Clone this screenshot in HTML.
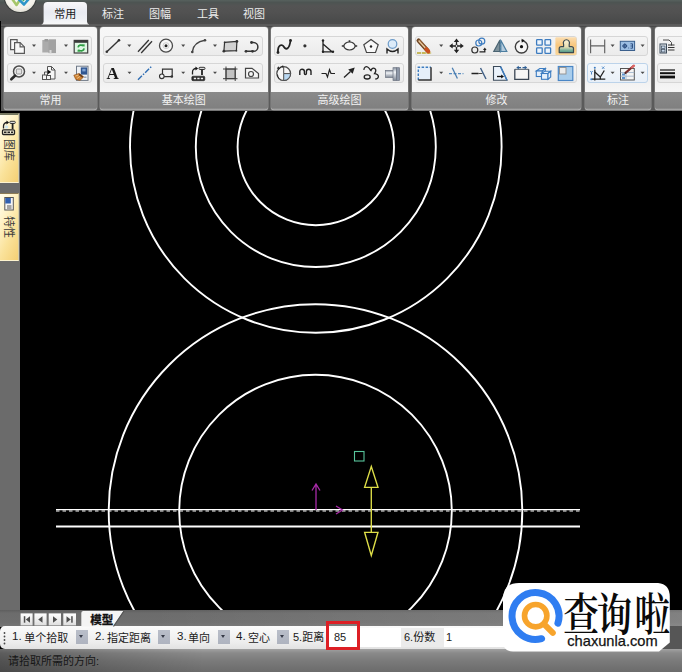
<!DOCTYPE html>
<html lang="zh-CN">
<head>
<meta charset="utf-8">
<title>CAD</title>
<style>
html,body{margin:0;padding:0;background:#000;}
body{width:682px;height:672px;overflow:hidden;font-family:"Liberation Sans","Noto Sans CJK SC",sans-serif;}
#root{position:relative;width:682px;height:672px;overflow:hidden;background:#000;}
.abs{position:absolute;}
#topbar{left:0;top:0;width:682px;height:27px;background:linear-gradient(#57615e 0,#4d5452 2.500px,#545454 6px,#515151 13px,#4a4b4b 21px,#4c4c4c 23.500px,#626262 25px,#565656 26px,#3c3c3c 27px);}
#ribbon{left:0;top:27px;width:682px;height:83.500px;background:#5a5a5a;}
.grp{position:absolute;top:0;height:83px;background:linear-gradient(#f7f7f7,#f1f1f1 55px,#f6f6f6 65px);border-radius:3px 3px 3px 3px;overflow:hidden;box-shadow:0 0 0 0.500px #8e8e8e;}
.grp .lab{position:absolute;left:0;right:0;top:65.400px;bottom:0;background:linear-gradient(#8a8a8a 0,#858585 8px,#808080 16px,#a4a4a4 17.600px);color:#f3f3f3;font-size:11px;line-height:17px;text-align:center;}
.row{position:absolute;height:18px;border:1px solid #d6d6d6;border-radius:3px;background:linear-gradient(#f4f4f4,#ebebeb);box-sizing:content-box;}
.tab{position:absolute;top:0.600px;height:26px;line-height:26px;font-size:11px;color:#ececec;white-space:nowrap;}
#tabact{position:absolute;left:44px;top:2px;width:43px;height:22.500px;border-radius:5px 5px 0 0;box-shadow:-1px 1px 0 -0.500px #cfcfcf,1px 1px 0 -0.500px #cfcfcf;background:linear-gradient(#fbfbfb,#eef0f4 60%,#f4f4f4);}
#side{left:0;top:113.200px;width:19.800px;height:498px;background:#6b6b6b;}
.vtab{position:absolute;left:0;width:17.600px;border-bottom:1px solid #fdf3cf;background:linear-gradient(115deg,#fffdf0 0,#fff3c8 30%,#fae29a 62%,#f4cf74 100%);border-right:0.800px solid #d8cfa8;}
.vtxt{position:absolute;left:2px;writing-mode:vertical-rl;text-orientation:sideways;font-size:11px;line-height:13px;color:#3c3c3c;white-space:nowrap;}
#canvas{left:20px;top:110.500px;width:662px;height:500px;background:#000;}
#band{left:0;top:610px;width:682px;height:17px;background:linear-gradient(90deg,rgba(0,0,0,0) 150px,rgba(255,255,255,0.070) 400px,rgba(255,255,255,0.140) 680px),linear-gradient(#5e5e5e 0,#6c6c6c 3px,#6e6e6e 12px,#767676 17px);}
#tool{left:0;top:626px;width:682px;height:23px;background:linear-gradient(90deg,rgba(0,0,0,0) 520px,#565656 520px),linear-gradient(#fbfbfb,#ededed 70%,#e2e2e2);border-radius:5px 0 0 5px;}
#status{left:0;top:648.500px;width:682px;height:24px;background:linear-gradient(90deg,rgba(0,0,0,0.330),rgba(0,0,0,0.120) 16%,rgba(0,0,0,0) 30%),linear-gradient(#a2a2a2 0,#8a8a8a 4px,#7a7a7a 12px,#6a6a6a 24px);}
.t{position:absolute;font-size:11px;line-height:14px;color:#1a1a1a;white-space:nowrap;}
.dd{position:absolute;top:4.200px;width:12px;height:14.300px;background:linear-gradient(#b9bec9,#aeb3bf);}
.dd:after{content:"";position:absolute;left:3.400px;top:5.200px;border:2.700px solid transparent;border-top:3px solid #363b48;border-bottom:0;}
.nav{position:absolute;top:613px;width:12px;height:12px;background:linear-gradient(#fdfdfd,#dcdcdc);border:0;}
</style>
</head>
<body>
<div id="root">
  <div id="topbar" class="abs"></div>
  <svg class="abs" style="left:38px;top:0" width="56" height="27" viewBox="38 0 56 27"><defs><linearGradient id="tg" x1="0" y1="0" x2="0" y2="1"><stop offset="0" stop-color="#f7f7f9"/><stop offset="0.450" stop-color="#e9ebf2"/><stop offset="0.750" stop-color="#eef0f5"/><stop offset="1" stop-color="#f8f8f8"/></linearGradient></defs><path d="M41.300 24.400 Q43.600 24 43.600 21.500 V6 Q43.600 2 47.600 2 H83 Q87 2 87 6 V21.500 Q87 24 89.300 24.400 Z" fill="url(#tg)"/></svg>
  <div class="tab" style="left:54.300px;color:#1a1a1a">常用</div>
  <div class="tab" style="left:102px">标注</div>
  <div class="tab" style="left:149px">图幅</div>
  <div class="tab" style="left:197px">工具</div>
  <div class="tab" style="left:243px">视图</div>

  <div id="ribbon" class="abs">
    <div class="grp" style="left:4px;width:93px"><div class="row" style="left:3px;top:9px;width:83px"></div><div class="row" style="left:3px;top:36px;width:83px"></div><div class="lab">常用</div></div>
    <div class="grp" style="left:100px;width:167.500px"><div class="row" style="left:3px;top:9px;width:158px"></div><div class="row" style="left:3px;top:36px;width:158px"></div><div class="lab">基本绘图</div></div>
    <div class="grp" style="left:271px;width:137px"><div class="row" style="left:3px;top:9px;width:128px"></div><div class="row" style="left:3px;top:36px;width:128px"></div><div class="lab">高级绘图</div></div>
    <div class="grp" style="left:412px;width:169px"><div class="row" style="left:3px;top:9px;width:160px"></div><div class="row" style="left:3px;top:36px;width:160px"></div><div class="lab">修改</div></div>
    <div class="grp" style="left:585px;width:66px"><div class="row" style="left:2px;top:9px;width:59px"></div><div class="row" style="left:2px;top:36px;width:59px;border-color:#bcd3ea;background:linear-gradient(#f3f7fb,#e9f0f8)"></div><div class="lab">标注</div></div>
    <div class="grp" style="left:655px;width:40px"><div class="row" style="left:2px;top:9px;width:40px"></div><div class="row" style="left:2px;top:36px;width:40px"></div><div class="lab"></div></div>
  </div>

<svg class="abs" id="icons" style="left:0;top:0;filter:blur(0.350px)" width="682" height="112" viewBox="0 0 682 112">
<g stroke="#5a5a5a" stroke-width="1.200" fill="#f8f8f8"><path d="M10.600 39.600 h6.500 v10 h-6.500 z"/><path d="M14.600 42.600 h5.500 l4.300 4.300 v6.500 h-9.800 z"/><path d="M20.100 42.600 v4.300 h4.300" fill="none"/></g>
<path d="M32.0 44.6 h4 l-2 2.300 z" fill="#4a4a4a" stroke="none"/>
<g stroke="none"><rect x="42.300" y="40" width="8" height="12.500" fill="#ababab"/><rect x="48.500" y="39.300" width="7.500" height="13.800" fill="#a2a2a2"/><rect x="44.500" y="39" width="3.500" height="2.500" fill="#9a9a9a"/><rect x="49.500" y="50" width="2" height="3.500" fill="#d8d8d8"/></g>
<path d="M64.0 44.6 h4 l-2 2.300 z" fill="#4a4a4a" stroke="none"/>
<g transform="translate(-0.400 0.100)"><rect x="74.600" y="40.300" width="13.500" height="12.600" fill="#e0f6e4" stroke="#3f3f3f" stroke-width="1.200"/><rect x="74.600" y="40.300" width="13.500" height="2.400" fill="#3a3a3a" stroke="none"/><path d="M78.500 47.300 a3 2.600 0 0 1 5.200 -1.500 M84.500 48.300 a3 2.600 0 0 1 -5.200 1.600" fill="none" stroke="#2f9e44" stroke-width="1.700"/><path d="M82.500 44.200 l2.800 0.300 l-0.800 2.600 z M80.500 51.800 l-2.800 -0.300 l0.800 -2.600 z" fill="#2f9e44" stroke="none"/></g>
<g><circle cx="19" cy="71.500" r="5.500" fill="#f4f4f4" stroke="#4a4a4a" stroke-width="1.500"/><rect x="16.300" y="69" width="5.400" height="5" rx="1" fill="#e2e2e2" stroke="#8a8a8a" stroke-width="0.900"/><path d="M15 75.700 L11.300 79.300" stroke="#2a2a2a" stroke-width="2.600" stroke-linecap="round"/></g>
<path d="M32.0 71.7 h4 l-2 2.300 z" fill="#4a4a4a" stroke="none"/>
<g stroke="#555" stroke-width="1" fill="#f6f6f6"><path d="M47.500 66.500 h4 l3.500 3.500 v9 h-7.500 z"/><path d="M51.500 66.500 v3.500 h3.500" fill="none"/><rect x="42.500" y="75" width="4" height="4.500"/><rect x="46.500" y="75.500" width="4" height="4"/><path d="M44.500 75 v-3 h3" fill="none"/><path d="M47.800 69.800 l3.400 2.200 l-3.400 2.200 z" fill="#111" stroke="none"/></g>
<path d="M64.0 71.7 h4 l-2 2.300 z" fill="#4a4a4a" stroke="none"/>
<g><rect x="76.500" y="66.200" width="11.500" height="14.200" fill="#eef1f5" stroke="#707a88" stroke-width="1"/><rect x="80.800" y="67.400" width="6.300" height="7.200" fill="#2f5590" stroke="none"/><rect x="82.300" y="68.800" width="3.300" height="2.600" fill="#7fa3d4" stroke="none"/><rect x="84" y="76.500" width="2.500" height="1.500" fill="#9aa6b8" stroke="none"/><path d="M73.800 75.200 l5.200 -1.800 l4.700 3.500 l-3.700 3.500 l-4.200 -0.900 z" fill="#cf8232" stroke="#8a4a12" stroke-width="0.600"/><path d="M75.500 76 l3 -1 M77 78.500 l3.500 -2.500" stroke="#f3d3a0" stroke-width="0.700" fill="none"/><path d="M79.500 73.600 l4 3 l-1.200 1.200 l-3.800 -2.900z" fill="#6a3f1d" stroke="none"/></g>
<g stroke="#333" fill="#333"><line x1="106.800" y1="51.700" x2="119" y2="40.300" stroke-width="1.400"/><circle cx="106.800" cy="51.700" r="1.300" stroke="none"/><circle cx="119" cy="40.300" r="1.300" stroke="none"/></g>
<path d="M127.3 44.6 h4 l-2 2.300 z" fill="#4a4a4a" stroke="none"/>
<g stroke="#333" stroke-width="1.300"><line x1="138" y1="51.700" x2="148.800" y2="40"/><line x1="141.200" y1="53" x2="152" y2="41.300"/></g>
<g><circle cx="166" cy="45.700" r="6.500" fill="#f7f7f7" stroke="#4a4a4a" stroke-width="1.300"/><circle cx="166" cy="45.700" r="3" fill="none" stroke="#c4c4c4" stroke-width="0.800"/><circle cx="166" cy="45.700" r="1.500" fill="#222"/></g>
<path d="M181.2 44.6 h4 l-2 2.300 z" fill="#4a4a4a" stroke="none"/>
<g stroke="#444" fill="#444"><path d="M192.300 52 Q193.500 42 205 40.300" fill="none" stroke-width="1.500"/><circle cx="192.300" cy="52" r="1.300" stroke="none"/><circle cx="205" cy="40.300" r="1.300" stroke="none"/></g>
<path d="M213.0 44.6 h4 l-2 2.300 z" fill="#4a4a4a" stroke="none"/>
<g stroke="#333" fill="#333"><path d="M223.900 51.200 L224.600 42.300 L236.900 41.400 L236.400 50.700 Z" fill="#d2d2d2" stroke-width="1.200"/><circle cx="223.900" cy="51.200" r="1.400" stroke="none"/><circle cx="236.900" cy="41.400" r="1.400" stroke="none"/><circle cx="224.600" cy="42.300" r="0.900" stroke="none"/><circle cx="236.400" cy="50.700" r="0.900" stroke="none"/></g>
<g stroke="#333" fill="#333"><path d="M246 51.300 H253.500 A4.400 4.400 0 0 0 253.500 42.500 H251.500" fill="none" stroke-width="1.500"/><circle cx="246" cy="51.300" r="1.400" stroke="none"/><circle cx="252.500" cy="51.300" r="1.400" stroke="none"/><circle cx="251.500" cy="42.500" r="1.400" stroke="none"/></g>
<text x="106.500" y="78.600" font-family="Liberation Serif,serif" font-weight="bold" font-size="17" fill="#1a1a1a" stroke="none">A</text>
<path d="M127.5 71.7 h4 l-2 2.300 z" fill="#4a4a4a" stroke="none"/>
<line x1="138" y1="79.700" x2="151.500" y2="66.500" stroke="#2d6cb3" stroke-width="1.400" stroke-dasharray="5.500 1.500 1.500 1.500"/>
<g stroke="#333" fill="#333"><path d="M162.500 74.500 V69.200 H172.200 V76.600 H164" fill="none" stroke-width="1.200"/><circle cx="161.800" cy="76.300" r="2.300" fill="#f4f4f4" stroke-width="1.100"/><circle cx="171.800" cy="76.500" r="1.300" stroke="none"/></g>
<path d="M181.2 71.7 h4 l-2 2.300 z" fill="#4a4a4a" stroke="none"/>
<g><rect x="191.800" y="76.200" width="13" height="4.500" rx="1.200" fill="#2a2a2a" stroke="#222" stroke-width="0.600"/><path d="M193.800 78.500 h9.500" stroke="#f0f0f0" stroke-width="1.300" stroke-dasharray="2.300 1.200"/><path d="M192.500 74.500 v-2.500 a3.500 3.500 0 0 1 3.500 -3.500" fill="none" stroke="#222" stroke-width="1.300"/><path d="M195.500 66.600 l2.600 1.900 l-2.600 1.900 z" fill="#111"/><rect x="199" y="67.300" width="6" height="2.200" rx="1" fill="#ddd" stroke="#222" stroke-width="0.900"/><path d="M202 69.500 v5.500" stroke="#222" stroke-width="1.800"/></g>
<path d="M213.0 71.7 h4 l-2 2.300 z" fill="#4a4a4a" stroke="none"/>
<g stroke="#3a3a3a" stroke-width="0.950"><rect x="226" y="69" width="9.200" height="9.700" fill="#c2c2c2"/><path d="M223 69 h14.500 M223 78.700 h14.500 M226 66.500 v14.500 M235.200 66.500 v14.500" fill="none"/></g>
<g stroke="#444" stroke-width="1.200" fill="#f6f6f6"><path d="M245.500 78 V68.300 H252 L258.500 73.500 V78 Z"/><circle cx="251" cy="74" r="2.500"/></g>
<g stroke="#222" fill="#222"><path d="M278 52.500 C277.500 44.500 282 43.500 284 47 S289.500 49 290.500 40.500" fill="none" stroke-width="1.800"/><circle cx="278" cy="52.500" r="1.400" stroke="none"/><circle cx="290.500" cy="40.500" r="1.400" stroke="none"/></g>
<circle cx="304.900" cy="45.800" r="1.600" fill="#333"/>
<g stroke="#222" fill="#222" stroke-width="1.300"><path d="M323 40.500 V51.800 H333 M323 44 L332 51.800" fill="none"/><circle cx="323" cy="40.500" r="1.200" stroke="none"/><circle cx="333" cy="51.800" r="1.200" stroke="none"/><circle cx="323" cy="51.800" r="1.200" stroke="none"/></g>
<g stroke="#333" stroke-width="1.200" fill="#f8f8f8"><path d="M341.800 46 h2.600 M354.600 46 h2.600 M349.500 40.300 v2" stroke-width="1.700"/><ellipse cx="349.500" cy="46" rx="5.600" ry="4"/></g>
<g stroke="#444" stroke-width="1.200" fill="#f8f8f8"><path d="M371 39.500 L378.200 44.800 L375.500 52.500 H366.500 L363.800 44.800 Z"/><circle cx="371" cy="46.500" r="1.200" fill="#222" stroke="none"/></g>
<g><circle cx="392.500" cy="44" r="4.300" fill="#dcebf9" stroke="#6d9bc9" stroke-width="1.200"/><path d="M387 53.500 V49 Q392.500 54 398 49 V53.500" fill="none" stroke="#222" stroke-width="1.400"/></g>
<g><circle cx="283.700" cy="73.600" r="6.900" fill="#f6f6f6" stroke="#4a4a4a" stroke-width="1.200"/><path d="M283.700 73.600 H290.600 A6.900 6.900 0 0 1 283.700 80.500 Z" fill="#b9d8f2" stroke="#4a4a4a" stroke-width="1"/><path d="M283.700 66.700 V73.600" stroke="#4a4a4a" stroke-width="1"/><path d="M278.300 70 a6.500 6.500 0 0 1 3 -3.300 M277.500 74.500 a6.500 6.500 0 0 0 1.500 4" fill="none" stroke="#222" stroke-width="1"/><path d="M276.800 68.800 l1.500 -2.500 l1.500 2.500z M283.200 65.300 l-2.200 1.200 l2.200 1.200z" fill="#222"/></g>
<path d="M299.800 75 v-3.500 a2.300 2.300 0 0 1 4.600 0 v2 a1 1 0 0 0 2 0 v-2 a2.300 2.300 0 0 1 4.600 0 v3.500" fill="none" stroke="#222" stroke-width="1.400"/>
<path d="M321.500 73.500 h4.500 l1.500 3.500 l2 -7.300 l1.500 3.800 h4" fill="none" stroke="#222" stroke-width="1.200"/>
<g stroke="#222" fill="#222"><line x1="344" y1="77.500" x2="350.500" y2="71.500" stroke-width="1.300"/><path d="M354.700 67.500 l-2 6.300 l-4.500 -4.300 z" stroke="none"/></g>
<g fill="none" stroke="#222" stroke-width="1.300"><path d="M363.800 69.800 C364.300 67 366 66.200 367.600 67 C369.600 68 370 70 371 70.600 C371.500 68.500 373.500 67.600 375 68.700 C376.600 70 375.600 72 374.500 73.700 C376.200 74 378.400 74.800 378.400 76.400 C378.400 78.200 376.500 79.200 375.200 78.800"/><ellipse cx="367.200" cy="76.900" rx="3" ry="2.100"/></g>
<defs><linearGradient id="sh" x1="0" y1="0" x2="0" y2="1"><stop offset="0" stop-color="#8b95a3"/><stop offset="0.350" stop-color="#f2f4f7"/><stop offset="1" stop-color="#7f8896"/></linearGradient></defs><g stroke="#6b7380" stroke-width="0.700"><rect x="385.500" y="70.500" width="8" height="7" fill="url(#sh)"/><rect x="393" y="67.700" width="3.500" height="12.800" fill="url(#sh)"/><rect x="396.500" y="67.700" width="3" height="12.800" fill="#8e98a8"/></g>
<g><path d="M417 53 h14.500" stroke="#b9a62a" stroke-width="1.500" stroke-dasharray="4 0.800"/><path d="M418.600 40.600 L427.600 50.600" stroke="#6f4523" stroke-width="4.200" stroke-linecap="round"/><path d="M418.600 40.600 L426 48.800" stroke="#e9c89c" stroke-width="1.500"/><path d="M419.800 39.800 L427 47.800" stroke="#a8683a" stroke-width="0.700"/><path d="M426.300 49.200 L428.300 51.400" stroke="#c9501e" stroke-width="4" stroke-linecap="round"/></g>
<path d="M439.2 44.6 h4 l-2 2.300 z" fill="#4a4a4a" stroke="none"/>
<g stroke="#222" fill="#222" stroke-width="1.300"><path d="M456.500 41 V51 M451.500 46 H461.500" fill="none"/><path d="M456.500 38.600 l2.700 3.500 h-5.400z M456.500 53.200 l2.700 -3.500 h-5.400z M449.200 45.900 l3.500 -2.700 v5.400z M463.800 45.900 l-3.500 -2.700 v5.400z" stroke="none"/><circle cx="456.500" cy="46" r="1.300" fill="#f4f4f4" stroke-width="0.800"/></g>
<g fill="none" stroke-width="1.200"><circle cx="478.800" cy="43" r="3" stroke="#3d7cc0"/><circle cx="481.800" cy="41.200" r="3" stroke="#3d7cc0"/><circle cx="474.800" cy="50" r="3" stroke="#333"/><path d="M479.500 51.800 h5.300 v-2.500" stroke="#222" stroke-width="1.300"/><path d="M484.800 47.500 l1.800 2.500 h-3.600z" fill="#222" stroke="none"/></g>
<g stroke-width="1.200"><path d="M499.800 40.300 L493.800 51.500 H499.800 Z" fill="#7d919b" stroke="#4a6472"/><path d="M500.800 40.300 L506.800 51.500 H500.800 Z" fill="#b3cbdd" stroke="#4a7da0"/><path d="M500.300 39 V53" stroke="#4a7da0" stroke-width="0.700" stroke-dasharray="2 1"/></g>
<g><circle cx="521.500" cy="46.800" r="6.200" fill="#f6f6f6" stroke="#3c3c3c" stroke-width="1.400"/><circle cx="521.500" cy="46.700" r="1.600" fill="#111"/><path d="M521.300 38.800 l3.300 1.500 l-2.800 2.400z" fill="#111"/><rect x="519.800" y="39" width="1.600" height="3.500" fill="#f4f4f4"/></g>
<g stroke="#3d7cc0" stroke-width="1.300" fill="#eef5fc"><rect x="536.600" y="39.600" width="5.600" height="5.600" rx="0.600"/><rect x="545" y="39.600" width="5.600" height="5.600" rx="0.600"/><rect x="536.600" y="47.800" width="5.600" height="5.600" rx="0.600"/><rect x="545" y="47.800" width="5.600" height="5.600" rx="0.600"/></g>
<defs><linearGradient id="og" x1="0" y1="0" x2="0" y2="1"><stop offset="0" stop-color="#fbddb0"/><stop offset="0.450" stop-color="#f8c77e"/><stop offset="1" stop-color="#fad79b"/></linearGradient></defs><rect x="555.400" y="37.300" width="21" height="17.700" rx="1" fill="url(#og)" stroke="none"/>
<defs><linearGradient id="stg" x1="0" y1="0" x2="0" y2="1"><stop offset="0" stop-color="#fdf3d6"/><stop offset="0.550" stop-color="#e9dfb4"/><stop offset="0.800" stop-color="#7fb39c"/><stop offset="1" stop-color="#4f9482"/></linearGradient></defs><g><path d="M559.200 52.600 V48.500 Q559.200 46.600 561.300 46.600 H563.600 V44.200 A3.100 3.100 0 1 1 569.200 44.200 V46.600 H571.300 Q573.500 46.600 573.500 48.500 V52.600 Z" fill="url(#stg)" stroke="#3a4a52" stroke-width="1.200" stroke-linejoin="round"/></g>
<g><rect x="418.300" y="67.300" width="12.700" height="12.700" fill="#e6effa" stroke="none"/><path d="M418.300 80 V67.300 H431" fill="none" stroke="#3d7cc0" stroke-width="1.400" stroke-dasharray="2.500 1.500"/><path d="M431 67.300 V80 H418.300" fill="none" stroke="#333" stroke-width="1.500"/></g>
<path d="M439.2 71.7 h4 l-2 2.300 z" fill="#4a4a4a" stroke="none"/>
<g fill="none"><path d="M449 73.600 h14.500" stroke="#5a8dc0" stroke-width="1.100" stroke-dasharray="3 1.500"/><path d="M452.200 67.800 L457.400 78.500" stroke="#4a7db0" stroke-width="1.300"/></g>
<g fill="none" stroke="#222"><path d="M471.500 73.500 h7" stroke-width="1.500"/><path d="M478.500 73.500 h4" stroke-width="0.800"/><path d="M480.500 68 L486 79" stroke="#3f5f85" stroke-width="1.400"/></g>
<g><path d="M493.500 66.500 h7 l6.500 13.700 h-13.500 z" fill="#eaf2fb" stroke="#3b4a5a" stroke-width="1.100"/><path d="M500.500 66.500 l6.500 13.700" stroke="#3d7cc0" stroke-width="1.500"/><path d="M497 76.500 h5" stroke="#111" stroke-width="1.300"/><path d="M504 76.500 l-2.800 -2 v4z" fill="#111"/></g>
<g><path d="M514.800 69.300 V79.300 H528.600 V69.300" fill="#f6f6f6" stroke="#3a4654" stroke-width="1.300"/><path d="M514.800 69.300 H528.600" stroke="#3a4654" stroke-width="0.900"/><path d="M518 67.600 h3 M525.500 67.600 h-3" stroke="#2f5f95" stroke-width="1.300"/><path d="M516.300 67.600 l2.500 -1.800 v3.600z M527.200 67.600 l-2.500 -1.800 v3.600z" fill="#2f5f95"/></g>
<g fill="#e6f0fb" stroke="#3d7cc0" stroke-width="1.100"><path d="M536.300 71 l3.500 -2.500 h5.500 l-3 2.500 z"/><rect x="536.300" y="71" width="6" height="5.500"/><path d="M542.300 71 l3 -2.500 v5.500 l-3 2.500z"/><rect x="541.500" y="73.500" width="6.500" height="5.800"/><path d="M541.500 73.500 l3 -2.300 h6.200 l-2.700 2.300 z"/><path d="M548 73.500 l2.700 -2.300 v5.800 l-2.700 2.300z"/></g>
<g><rect x="558.300" y="66.500" width="14.500" height="14" fill="#a9cdec" stroke="#4a86c5" stroke-width="1.200"/><rect x="559.500" y="67.500" width="6.500" height="6.500" fill="#ececec" stroke="#8f8f8f" stroke-width="0.900"/></g>
<g stroke="#606060" stroke-width="1.150" fill="none"><path d="M590.600 39.500 V53.200 M604.700 39.500 V53.200 M590.600 45.800 H604.700"/></g>
<path d="M610.6 44.6 h4 l-2 2.300 z" fill="#4a4a4a" stroke="none"/>
<g><rect x="620.300" y="41.300" width="14.300" height="9.200" fill="#9bbde2" stroke="#3a5f8c" stroke-width="1"/><circle cx="624.800" cy="46" r="1.800" fill="none" stroke="#27487a" stroke-width="0.900"/><path d="M622.300 46 h5 M624.800 43.500 v5 M628.300 48 h0.800 M630.500 43.800 h2 v4.400 h-2 M630.500 46 h2" fill="none" stroke="#27487a" stroke-width="0.900"/></g>
<path d="M640.6 44.6 h4 l-2 2.300 z" fill="#4a4a4a" stroke="none"/>
<g fill="none"><path d="M594.800 69.500 V80.400 M592 79.200 H605.300" stroke="#222" stroke-width="1.300"/><path d="M594.800 72 L600.300 77 L604.300 70.500 M600.300 77 V79.200" stroke="#222" stroke-width="1.300"/><path d="M590.300 71 l1.200 1.500 l1.200 -1.500 M591.500 72.500 v2" stroke="#3d7cc0" stroke-width="0.900"/><path d="M602 66.500 l2.400 2.400 M604.400 66.500 l-2.400 2.400" stroke="#3d7cc0" stroke-width="0.800"/><circle cx="594.800" cy="67.800" r="1" fill="#3d7cc0"/><circle cx="591.300" cy="79.300" r="1" fill="#3d7cc0"/></g>
<path d="M610.6 71.7 h4 l-2 2.300 z" fill="#4a4a4a" stroke="none"/>
<g><rect x="620.500" y="68.500" width="13.800" height="11.500" fill="#f4f4f4" stroke="#555" stroke-width="1"/><path d="M620.500 72.500 h13.800 M620.500 76.200 h13.800 M626 72.500 v7.500" stroke="#9ab0c8" stroke-width="0.800"/><rect x="622" y="73.500" width="3" height="2" fill="#5d92cc"/><rect x="622" y="77" width="3" height="2" fill="#5d92cc"/><path d="M625.500 72.800 L633.500 66" stroke="#7a3030" stroke-width="2.200" stroke-linecap="round"/><path d="M624.500 73.800 l2 -0.500 l-1.200 -1.200z" fill="#222"/><path d="M632 67.300 l2 -1.700" stroke="#d66" stroke-width="2.200" stroke-linecap="round"/></g>
<path d="M640.6 71.7 h4 l-2 2.300 z" fill="#4a4a4a" stroke="none"/>
<g fill="none" stroke="#4a4a4a" stroke-width="1"><path d="M663 40 h6 l2.500 2.500 v3"/><rect x="660" y="44" width="6.500" height="9" fill="#e9eef5" stroke="#3b4a5a"/><rect x="661.500" y="46" width="3.500" height="2.500" fill="#c9d9ec" stroke="#3b4a5a" stroke-width="0.700"/><rect x="661.500" y="49.500" width="3.500" height="2.500" fill="#c9d9ec" stroke="#3b4a5a" stroke-width="0.700"/><path d="M668 45 h6.500 M668 47.500 h6.500 M668 50 h6.500" stroke="#333" stroke-width="1"/></g>
<g stroke="#111"><path d="M660 70 h15" stroke-width="1.200"/><path d="M660 73.200 h15" stroke-width="2"/><path d="M660 77 h15" stroke-width="2.800"/></g>
</svg>
<svg class="abs" id="orb" style="left:0;top:0" width="44" height="18" viewBox="0 0 44 18">
<defs><radialGradient id="ob" cx="0.500" cy="0.350" r="0.700"><stop offset="0" stop-color="#ffffff"/><stop offset="0.750" stop-color="#f4f2ea"/><stop offset="1" stop-color="#d8d6cc"/></radialGradient></defs>
<circle cx="20.300" cy="-3.500" r="16.600" fill="#3a3d3c"/>
<circle cx="20.300" cy="-3.500" r="15.600" fill="url(#ob)"/>
<path d="M11.500 -2 L16.500 5 L20.500 -1" fill="none" stroke="#a6c66a" stroke-width="2.600" stroke-linejoin="round"/>
<path d="M18.500 -1 L24 4.500 L30 -2.500" fill="none" stroke="#2e96c8" stroke-width="2.600" stroke-linejoin="round"/>
<path d="M20.500 -3 L24 1" fill="none" stroke="#39a86b" stroke-width="1.600"/>
</svg>
  <div class="abs" style="left:0;top:21px;width:1.300px;height:91px;background:#000"></div>
  <div id="canvas" class="abs"></div>
  <svg class="abs" style="left:0;top:0" width="682" height="672" viewBox="0 0 682 672">
    <defs><clipPath id="cv"><rect x="20" y="111" width="662" height="499.500"/></clipPath></defs>
    <g clip-path="url(#cv)" fill="none" stroke="#fff" stroke-width="1.9">
      <circle cx="315.800" cy="147" r="185.800"/>
      <circle cx="315.800" cy="147" r="120"/>
      <circle cx="315.800" cy="147" r="78.200"/>
      <circle cx="315.500" cy="511" r="206.800"/>
      <circle cx="315.500" cy="511" r="136.300"/>
      <line x1="56" y1="526.500" x2="580" y2="526.500" stroke-width="1.800"/>
      <line x1="56" y1="509.700" x2="580" y2="509.700" stroke-width="1.300"/>
      <line x1="56" y1="511" x2="580" y2="511" stroke-width="1" stroke-dasharray="3.500 3"/>
    </g>
    <rect x="354.500" y="451.500" width="9.500" height="9.500" fill="none" stroke="#58c49c" stroke-width="1.100"/>
    <g fill="none" stroke="#dede48" stroke-width="1.350" stroke-linejoin="miter">
      <path d="M371.300 466.500 L378 487.300 L364.600 487.300 Z"/>
      <path d="M371.300 555.500 L378 532.300 L364.600 532.300 Z"/>
      <line x1="371.300" y1="487.300" x2="371.300" y2="532.300"/>
    </g>
    <g fill="none" stroke="#a82aa8" stroke-width="1.300">
      <path d="M316 510 V484 M312 490.500 L316 484 L320 490.500"/>
      <path d="M336 506 L342.500 510 L336 514"/>
    </g>
  </svg>

  <div id="side" class="abs">
    <div class="vtab" style="top:0;height:66.500px;border-top:2.500px solid #74765f"><div class="vtxt" style="top:23.500px">图库</div>
      <svg class="abs" style="left:0;top:3.500px" width="17" height="18" viewBox="0 0 17 18"><rect x="2.500" y="10.800" width="12" height="4.700" rx="1" fill="#f6f0d8" stroke="#222" stroke-width="1.300"/><path d="M4 13.200 h9" stroke="#222" stroke-width="1.400" stroke-dasharray="2.500 1"/><path d="M3.500 9.500 v-2.500 a3.500 3.500 0 0 1 3.500 -3.500" fill="none" stroke="#222" stroke-width="1.300"/><path d="M6.500 1.600 l2.600 1.900 l-2.600 1.900 z" fill="#111"/><rect x="9.800" y="2.300" width="5.500" height="2.200" rx="1" fill="#ddd" stroke="#222" stroke-width="0.900"/><path d="M12.600 4.500 v5.500" stroke="#222" stroke-width="1.800"/><circle cx="6.500" cy="8" r="1.800" fill="#cfe6ee" stroke="none"/></svg>
    </div>
    <div class="vtab" style="top:79.800px;height:66.500px;border-top:1.500px solid #8a7a55"><div class="vtxt" style="top:22.500px">特性</div>
      <svg class="abs" style="left:0;top:2px" width="17" height="16" viewBox="0 0 17 16"><rect x="4.800" y="1.500" width="8.500" height="12.500" fill="#f4f4f4" stroke="#555" stroke-width="1"/><rect x="5.300" y="2" width="5.500" height="5.500" fill="#2f5fb0"/><path d="M7 10 h4.500 M7 12 h4.500" stroke="#444" stroke-width="0.900"/></svg>
    </div>
  </div>

  <div id="band" class="abs"></div>
  <div id="tool" class="abs">
    <div class="t" style="left:12px;top:3.300px;font-size:11.500px">1.</div><div class="t" style="left:24.300px;top:5px">单个拾取</div><div class="dd" style="left:76px"></div>
    <div class="t" style="left:95px;top:3.300px;font-size:11.500px">2.</div><div class="t" style="left:107px;top:5px">指定距离</div><div class="dd" style="left:158px"></div>
    <div class="t" style="left:177px;top:3.300px;font-size:11.500px">3.</div><div class="t" style="left:188px;top:5px">单向</div><div class="dd" style="left:218px"></div>
    <div class="t" style="left:236px;top:3.300px;font-size:11.500px">4.</div><div class="t" style="left:248px;top:5px">空心</div><div class="dd" style="left:277px"></div>
    <div class="t" style="left:293px;top:4px">5.距离</div>
    <div class="abs" style="left:326px;top:1.700px;width:75px;height:19.500px;background:#fff"></div>
    <div class="t" style="left:334px;top:4px">85</div>
    <div class="abs" style="left:401px;top:1.700px;width:43px;height:19.500px;background:#ebebeb"></div>
    <div class="t" style="left:404px;top:4px">6.份数</div>
    <div class="abs" style="left:444px;top:1.700px;width:70px;height:19.500px;background:#fff"></div>
    <div class="t" style="left:446px;top:4px">1</div>
  </div>

  <svg class="abs" style="left:0;top:608px" width="140" height="44" viewBox="0 608 140 44">
    <defs><linearGradient id="nb" x1="0" y1="0" x2="0" y2="1"><stop offset="0" stop-color="#ffffff"/><stop offset="1" stop-color="#dedede"/></linearGradient></defs>
    <path d="M81.300 626.500 V613 Q81.300 611 83.300 611 H123.500 L113 626.500 Z" fill="#f4f4f4"/>
    <path d="M124 611 L113.500 626.500" stroke="#555" stroke-width="1.200"/>
    <g fill="url(#nb)"><rect x="20.600" y="613.400" width="12" height="12"/><rect x="34.400" y="613.400" width="12.200" height="12"/><rect x="48.700" y="613.400" width="12.300" height="12"/><rect x="63.300" y="613.400" width="12.700" height="12"/></g>
    <g fill="#4e4e4e"><rect x="23.800" y="616.200" width="1.500" height="6.500"/><path d="M30 616.200 v6.500 l-4.200 -3.250z"/><path d="M42.500 616.200 v6.500 l-4.300 -3.250z"/><path d="M53 616.200 v6.500 l4.300 -3.250z"/><path d="M66.500 616.200 v6.500 l4.200 -3.250z"/><rect x="71.200" y="616.200" width="1.500" height="6.500"/></g>
    <g fill="#444"><circle cx="4.500" cy="633" r="0.900"/><circle cx="4.500" cy="636.500" r="0.900"/><circle cx="4.500" cy="640" r="0.900"/><circle cx="4.500" cy="643.500" r="0.900"/></g>
    <text x="90.200" y="623.600" font-family="Liberation Sans,Noto Sans CJK SC,sans-serif" font-weight="bold" font-size="11.500" fill="#111" stroke="#111" stroke-width="0.300">模型</text>
  </svg>
  <div id="status" class="abs"><div class="t" style="left:8px;top:5px;font-size:11px;color:#161616">请拾取所需的方向:</div></div>
  <div class="abs" style="left:325.700px;top:620.800px;width:28.500px;height:23.300px;border:3.200px solid #dd1f25;box-sizing:content-box"></div>

  <svg class="abs" id="wmsvg" style="left:500px;top:580px" width="182" height="80" viewBox="500 580 182 80">
    <defs><clipPath id="wmc"><rect x="503" y="583" width="167.500" height="68" rx="13"/></clipPath></defs>
    <path d="M519 583 H658 Q669.800 584 669.800 597 V642.500 L659 651.500 H513 Q503 651.500 503 641 V599 Q503 583 519 583 Z" fill="#fff"/>
    <path d="M541.600 638.700 A23.500 23.500 0 1 1 557.900 623.200" fill="none" stroke="#2f7df1" stroke-width="7" stroke-linecap="round"/>
    <circle cx="535.700" cy="615.700" r="11.200" fill="none" stroke="#f7a42c" stroke-width="5.600"/>
    <path d="M543.800 623.800 L552.800 632.800" stroke="#f7a42c" stroke-width="6" stroke-linecap="round"/>
    <g clip-path="url(#wmc)">
    <text transform="translate(563.300 631.400) scale(1 1.285)" x="0 33.300 71.200" y="0" font-family="Liberation Serif,Noto Serif CJK SC,serif" font-weight="600" font-size="35.600" fill="#0a0a0a">查询啦</text>
    <text x="567.300" y="646" font-family="Liberation Sans,sans-serif" font-size="14.600" fill="#111" stroke="#111" stroke-width="0.250" textLength="90.300" lengthAdjust="spacingAndGlyphs">chaxunla.com</text>
    </g>
  </svg>
</div>
</body>
</html>
